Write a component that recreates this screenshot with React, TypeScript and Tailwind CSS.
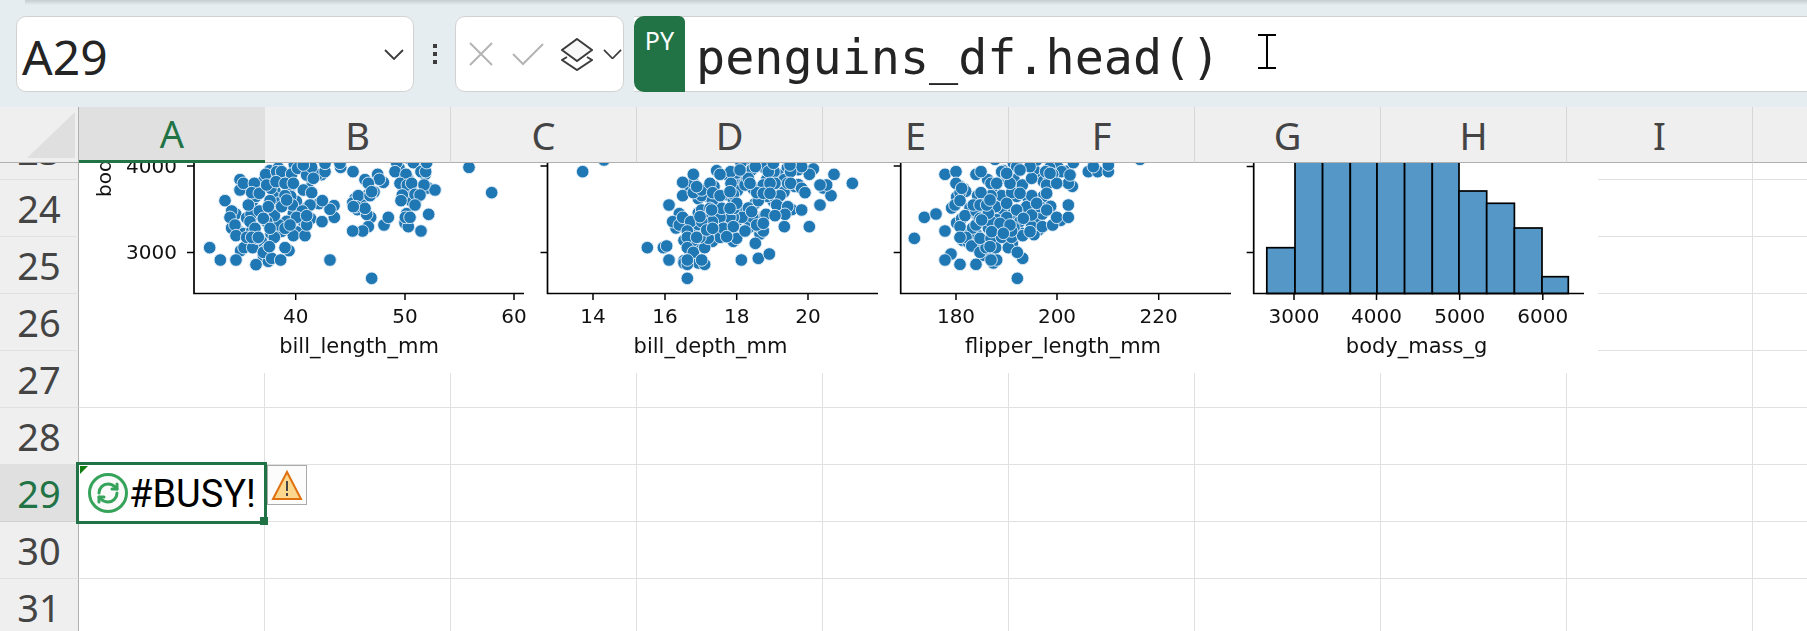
import React from 'react';
import { RefreshCw } from 'lucide-react';

const COLUMNS = ['A', 'B', 'C', 'D', 'E', 'F', 'G', 'H', 'I', ''];
const ROWS = [24, 25, 26, 27, 28, 29, 30, 31];

type Pt = [number, number];

// dot positions measured from the reference, in 3x crop units
const bill_length: Pt[] = [[119,293],[151,330],[198,330],[258,344],[480,330],[605,385],[965,128],[897,52],[795,120],[776,193],[753,243],[715,230],[706,202],[720,202],[642,225],[655,202],[595,230],[578,243],[548,243],[456,215],[493,202],[480,178],[457,152],[165,152],[185,183],[180,202],[195,225],[198,257],[222,293],[248,293],[262,265],[230,262],[290,307],[280,307],[305,325],[332,330],[345,293],[313,262],[298,290],[370,257],[405,257],[410,225],[327,225],[313,197],[243,193],[235,165],[210,120],[220,100],[253,100],[245,128],[268,130],[287,73],[320,65],[335,65],[303,115],[290,105],[318,95],[345,137],[365,72],[383,55],[410,75],[425,52],[465,65],[512,52],[549,65],[623,73],[628,88],[595,100],[565,137],[600,137],[605,125],[558,170],[590,193],[585,175],[680,38],[675,65],[708,73],[730,38],[753,65],[767,65],[770,38],[690,100],[712,105],[725,100],[762,105],[735,133],[750,135],[697,135],[693,152],[735,165],[400,120],[425,128],[420,165],[367,165],[397,183],[380,202],[410,197],[345,100],[370,100],[300,152],[268,183],[290,215],[280,205],[240,215],[255,235],[300,235],[345,235],[360,225],[295,170],[335,170],[400,45],[430,85],[245,262],[265,262],[550,170],[465,40],[510,40],[350,150]];

const bill_depth: Pt[] = [[158,65],[222,30],[352,293],[400,293],[410,288],[417,165],[458,97],[458,137],[490,73],[428,215],[448,225],[458,202],[482,215],[472,243],[472,262],[472,293],[490,307],[524,293],[417,330],[472,343],[472,330],[524,343],[515,330],[472,385],[634,330],[685,325],[718,312],[676,280],[620,265],[570,262],[535,265],[510,262],[500,262],[645,243],[700,243],[763,230],[838,230],[815,180],[870,165],[903,137],[890,105],[870,105],[967,100],[912,73],[850,57],[838,73],[815,50],[782,65],[732,65],[715,65],[676,50],[633,38],[602,65],[570,73],[603,100],[645,105],[655,85],[700,105],[735,100],[773,100],[782,100],[815,115],[825,128],[750,137],[685,152],[740,165],[773,170],[765,193],[708,193],[735,197],[668,202],[636,202],[610,202],[600,202],[570,202],[547,215],[515,180],[575,175],[612,175],[665,185],[515,137],[490,128],[515,120],[547,152],[540,100],[548,128],[570,137],[610,133],[600,125],[680,128],[700,130],[720,100],[515,215],[530,240],[580,235],[610,230],[680,225],[700,220],[548,235],[510,200],[540,175],[620,160],[720,130],[660,100],[630,60],[730,40],[780,45],[590,260],[545,180],[500,110],[600,175]];

const flipper_length: Pt[] = [[103,265],[133,202],[168,192],[195,243],[195,73],[228,65],[228,100],[288,73],[303,65],[240,128],[225,165],[240,152],[245,115],[240,230],[258,262],[240,262],[255,197],[275,288],[213,312],[195,330],[240,343],[288,343],[350,330],[333,330],[300,307],[318,293],[347,293],[385,293],[428,325],[412,307],[412,385],[300,265],[333,265],[365,262],[395,262],[428,257],[395,243],[333,215],[288,225],[455,230],[487,230],[518,225],[530,202],[565,202],[565,165],[487,192],[440,170],[380,202],[288,183],[347,170],[365,137],[333,137],[303,128],[333,100],[365,65],[380,73],[427,105],[455,85],[455,137],[500,105],[565,100],[545,65],[518,73],[497,65],[625,65],[653,65],[685,65],[640,50],[685,45],[580,38],[470,30],[410,50],[450,50],[530,100],[500,130],[395,128],[280,165],[300,205],[325,190],[380,160],[410,180],[455,195],[430,205],[360,220],[390,225],[335,245],[350,100],[390,100],[420,130],[480,170],[510,70],[570,75],[780,28],[345,28],[380,70],[420,60],[300,165],[320,165],[470,160],[500,180],[330,290],[370,250],[450,245],[305,210],[330,150]];

// the real plot is denser than what can be picked out by eye: dots inside a
// cluster get a slightly offset twin drawn underneath
function withOverlaps(dots: Pt[]): Pt[] {
  const twins: Pt[] = [];
  dots.forEach(([x, y], i) => {
    const near = dots.filter(([a, b]) => Math.hypot(a - x, b - y) < 45).length;
    if (near >= 4) {
      twins.push([x + (i % 3 === 0 ? 12 : -10), y + (i % 2 === 0 ? 9 : -11)]);
    }
  });
  return [...twins, ...dots];
}

const scatters = [
  { left: 194, right: 524, ox: 170, label: 'bill_length_mm', labelX: 359, dots: withOverlaps(bill_length), ticks: [[295.7, '40'], [405, '50'], [514, '60']] },
  { left: 547.5, right: 878, ox: 530, label: 'bill_depth_mm', labelX: 710.5, dots: withOverlaps(bill_depth), ticks: [[593, '14'], [665, '16'], [736.7, '18'], [808, '20']] },
  { left: 900.7, right: 1231, ox: 880, label: 'flipper_length_mm', labelX: 1063, dots: withOverlaps(flipper_length), ticks: [[956, '180'], [1057, '200'], [1158.7, '220']] },
];

// histogram bins: x edges and bar tops
const bars = [
  [1266.8, 1295, 247.7], [1295, 1322.6, 150], [1322.6, 1350.3, 150], [1350.3, 1377, 150],
  [1377, 1404.6, 150], [1404.6, 1432.3, 150], [1432.3, 1459, 150], [1459, 1486.7, 191],
  [1486.7, 1514.4, 203.3], [1514.4, 1542, 228], [1542, 1568.3, 276.7],
];

const AXIS_Y = 293.5;

function PairPlot() {
  const fontFamily = '"DejaVu Sans", sans-serif';
  return (
    <svg
      width="1519"
      height="210"
      viewBox="79 163 1519 210"
      className="absolute left-[79px] top-0 bg-white blur-[0.4px]"
      style={{ fontFamily }}
    >
      <text x="111" y="197" fontSize="20" fill="#111" transform="rotate(-90 111 197)">body_mass_g</text>
      <text x="177" y="173" fontSize="20" fill="#111" textAnchor="end">4000</text>
      <text x="177" y="259" fontSize="20" fill="#111" textAnchor="end">3000</text>

      {scatters.map((p) => (
        <g key={p.label}>
          {p.dots.map(([x, y], i) => (
            <circle key={i} cx={p.ox + x / 3} cy={150 + y / 3} r="6.3" fill="#1f77b4" stroke="#e8f1f8" strokeWidth="0.9" />
          ))}
          <path
            d={`M${p.left} 150V${AXIS_Y}H${p.right}M${p.left - 7} 166H${p.left}M${p.left - 7} 252.5H${p.left}`}
            stroke="#000"
            strokeWidth="1.7"
            fill="none"
          />
          {p.ticks.map(([x, t]) => (
            <g key={t as string}>
              <path d={`M${x} ${AXIS_Y}v6.5`} stroke="#000" strokeWidth="1.5" />
              <text x={x as number} y="323" fontSize="20" fill="#111" textAnchor="middle">{t}</text>
            </g>
          ))}
          <text x={p.labelX} y="353" fontSize="21" fill="#111" textAnchor="middle">{p.label}</text>
        </g>
      ))}

      {bars.map(([a, b, top]) => (
        <rect key={a} x={a} y={top} width={b - a} height={AXIS_Y - top} fill="#5598c7" stroke="#000" strokeWidth="1.7" />
      ))}
      <path d={`M1253.7 150V${AXIS_Y}H1584M1246.7 166.5H1253.7M1246.7 252.5H1253.7`} stroke="#000" strokeWidth="1.7" fill="none" />
      {[[1294, '3000'], [1376.5, '4000'], [1459.7, '5000'], [1542.8, '6000']].map(([x, t]) => (
        <g key={t as string}>
          <path d={`M${x} ${AXIS_Y}v6.5`} stroke="#000" strokeWidth="1.5" />
          <text x={x as number} y="323" fontSize="20" fill="#111" textAnchor="middle">{t}</text>
        </g>
      ))}
      <text x="1416.6" y="353" fontSize="21" fill="#111" textAnchor="middle">body_mass_g</text>
    </svg>
  );
}

function Chevron({ className }: { className: string }) {
  return (
    <svg viewBox="0 0 20 11" className={className} fill="none" stroke="#3c3c3c" strokeWidth="1.8">
      <path d="M1 1l9 9 9-9" />
    </svg>
  );
}

function FormulaBar() {
  return (
    <div className="relative flex h-[107px] bg-[#e6edf0] pt-[16px] pb-[15px]">
      <div className="absolute left-[25px] right-0 top-0 h-[5px] bg-gradient-to-b from-[#c6cdd1] to-[#e6edf0]" />
      <div className="ml-[16px] flex w-[398px] items-center justify-between rounded-[10px] border border-[#d2d2d2] bg-white pl-[5px] pr-[9px]">
        <span className="pt-[6px] text-[48px] leading-none text-[#242424]">A29</span>
        <Chevron className="w-[20px]" />
      </div>
      <div className="flex w-[41px] flex-col items-center justify-center gap-[4px]">
        <span className="h-[4px] w-[4px] bg-[#3c3c3c]" />
        <span className="h-[4px] w-[4px] bg-[#3c3c3c]" />
        <span className="h-[4px] w-[4px] bg-[#3c3c3c]" />
      </div>
      <div className="flex w-[169px] items-center rounded-[10px] border border-[#d2d2d2] bg-white pl-[12px]">
        <svg width="26" height="26" viewBox="0 0 26 26" fill="none" stroke="#b4b4b4" strokeWidth="2">
          <path d="M2 2l22 22M24 2L2 24" />
        </svg>
        <svg width="32" height="24" viewBox="0 0 32 24" fill="none" stroke="#b4b4b4" strokeWidth="2" className="ml-[18px]">
          <path d="M1 12l10 10L31 2" />
        </svg>
        <svg width="32" height="33" viewBox="0 0 32 33" fill="none" stroke="#3c3c3c" strokeWidth="2" className="ml-[17px]">
          <path d="M16 1L31 12 16 23 1 12z" fill="#f7f7f7" />
          <path d="M6 19l-5 3 15 10 15-10-5-3" />
        </svg>
        <Chevron className="ml-[10px] w-[19px]" />
      </div>
      <div className="ml-[10px] flex flex-1 border-y border-[#d2d2d2] bg-white">
        <div className="-my-px flex h-[76px] w-[51px] justify-center rounded-l-[10px] rounded-tr-[6px] bg-[#217346] pt-[8px] text-[25px] leading-[32px] text-white">
          PY
        </div>
        <span className="ml-[11px] mt-[4px] font-['DejaVu_Sans_Mono',monospace] text-[48.4px] leading-[72px] text-[#242424]">
          penguins_df.head()
        </span>
      </div>
      {/* text cursor */}
      <svg width="18" height="35" viewBox="0 0 18 35" className="absolute left-[1258px] top-[34px]" stroke="#000" fill="none">
        <path d="M0 1h18M0 34h18M9 1v33" strokeWidth="2" />
      </svg>
    </div>
  );
}

function ColumnHeader() {
  return (
    <div className="flex h-[56px] bg-[#efefef]">
      <div className="relative w-[79px] shrink-0 border-r border-b border-[#b0b0b0]">
        <svg width="78" height="55" className="absolute left-0 top-0">
          <path d="M75 5V51H27z" fill="#dfdfdf" />
        </svg>
      </div>
      {COLUMNS.map((c) =>
        c === 'A' ? (
          <div key={c} className="flex w-[186px] shrink-0 items-center justify-center border-b-[3px] border-[#217346] bg-[#e0e0e0] text-[38px] text-[#217346]">
            {c}
          </div>
        ) : (
          <div key={c} className="flex w-[186px] shrink-0 items-center justify-center border-r border-b border-r-[#d6d6d6] border-b-[#b0b0b0] pt-[1px] text-[38px] text-[#444]">
            {c}
          </div>
        )
      )}
    </div>
  );
}

function SheetRow({ row }: { row: number }) {
  const selected = row === 29;
  return (
    <div className="flex h-[57px]">
      <div
        className={`flex w-[79px] shrink-0 items-center justify-center border-r border-r-[#b0b0b0] border-b text-[38px] ${
          selected ? 'border-b-[#d0d0d0] bg-[#e0e0e0] text-[#217346]' : 'border-b-[#e0e0e0] bg-[#efefef] text-[#444]'
        }`}
      >
        {row}
      </div>
      {COLUMNS.map((c) => (
        <div key={c} className="w-[186px] shrink-0 border-r border-b border-[#e0e0e0]" />
      ))}
    </div>
  );
}

export default function App() {
  return (
    <div className="h-[631px] w-[1807px] overflow-hidden bg-white font-['Noto_Sans',sans-serif]">
      <FormulaBar />
      <ColumnHeader />
      <div className="relative h-[468px] overflow-hidden">
        {/* row 23 is scrolled mostly out of view */}
        <div className="flex h-[17px]">
          <div className="flex w-[79px] shrink-0 items-end justify-center overflow-hidden border-r border-r-[#b0b0b0] border-b border-b-[#e0e0e0] bg-[#efefef] text-[38px] leading-[57px] text-[#444]">
            <span className="h-[57px] shrink-0">23</span>
          </div>
          {COLUMNS.map((c) => (
            <div key={c} className="w-[186px] shrink-0 border-r border-b border-[#e0e0e0]" />
          ))}
        </div>
        {ROWS.map((r) => (
          <SheetRow key={r} row={r} />
        ))}

        <PairPlot />

        {/* active cell A29 */}
        <div className="absolute left-[76px] top-[299px] flex h-[62px] w-[191px] items-center border-[3px] border-[#217346] bg-white pl-[9px]">
          <div className="absolute left-[1px] top-[1px] h-0 w-0 border-t-[8px] border-r-[8px] border-t-[#107c10] border-r-transparent" />
          <div className="flex h-[40px] w-[40px] shrink-0 items-center justify-center rounded-full border-[3px] border-[#35a35a] bg-[#fafafa]">
            <RefreshCw size={24} strokeWidth={3} color="#35a35a" />
          </div>
          <span className="ml-[1px] pt-[1px] font-['Roboto',sans-serif] text-[38px] leading-none text-black">#BUSY!</span>
          <div className="absolute -bottom-[4px] -right-[4px] h-[8px] w-[8px] bg-[#217346]" />
        </div>

        {/* error smart tag */}
        <div className="absolute left-[267px] top-[302px] flex h-[40px] w-[40px] items-center justify-center border border-[#aaa] bg-[#fcfcfc]">
          <svg width="32" height="32" viewBox="0 0 32 32">
            <path d="M16 3L30 30H2z" fill="#fbd88e" stroke="#e07010" strokeWidth="2" />
            <path d="M16 12v10M16 24v3" stroke="#444" strokeWidth="2" />
          </svg>
        </div>
      </div>
    </div>
  );
}
